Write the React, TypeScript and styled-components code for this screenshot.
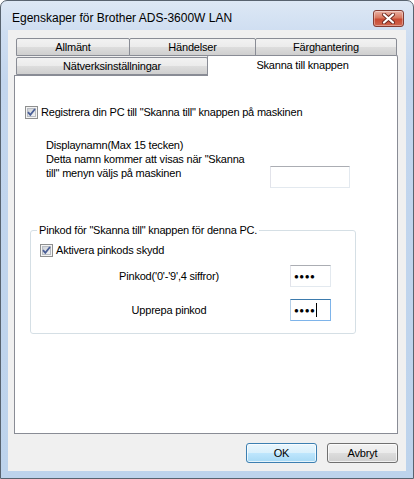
import React from "react";
import styled, { createGlobalStyle } from "styled-components";

const GlobalStyle = createGlobalStyle`
  html, body {
    margin: 0;
    padding: 0;
    background: #ffffff;
  }
  body {
    font-family: "Liberation Sans", Arial, sans-serif;
    font-size: 11px;
    letter-spacing: -0.2px;
    color: #000;
  }
`;

const Window = styled.div`
  width: 414px;
  height: 479px;
  box-sizing: border-box;
  border: 1px solid #58636f;
  border-radius: 7px 7px 0 0;
  background: linear-gradient(#dde8f5 0px, #cfdef1 30px, #c3d6ee 80px, #bdd3ec 100%);
  padding: 0 7px 7px 7px;
  display: flex;
  flex-direction: column;
  overflow: hidden;
`;

const TitleBar = styled.div`
  height: 29px;
  margin: 0 -7px;
  padding: 9px 9px 0 11px;
  box-sizing: border-box;
  display: flex;
  align-items: flex-start;
  justify-content: space-between;
  flex-shrink: 0;
`;

const TitleText = styled.div`
  font-family: "Liberation Sans", Arial, sans-serif;
  font-size: 12px;
  letter-spacing: 0;
  line-height: 16px;
  color: #000;
`;

const CloseBtn = styled.div`
  width: 31px;
  height: 17px;
  box-sizing: border-box;
  border: 1px solid #833c33;
  border-radius: 3px;
  background: linear-gradient(#eab2a6 0%, #d8785f 45%, #c94a33 55%, #d0674f 100%);
  box-shadow: inset 0 0 0 1px rgba(255, 255, 255, 0.35);
  display: flex;
  align-items: center;
  justify-content: center;
`;

const Client = styled.div`
  flex: 1;
  background: #f0f0f0;
  display: flex;
  flex-direction: column;
  padding: 9px 8px 8px 6px;
  box-sizing: border-box;
  gap: 9px;
`;

const TabControl = styled.div`
  flex: 1;
  display: flex;
  flex-direction: column;
`;

const TabRow = styled.div<{ $h: number }>`
  display: flex;
  align-items: flex-end;
  padding-left: 2px;
  height: ${(p) => p.$h}px;
`;

const Tab = styled.div<{ $w: number; $active?: boolean }>`
  width: ${(p) => p.$w}px;
  box-sizing: border-box;
  height: ${(p) => (p.$active ? 21 : 18)}px;
  border: 1px solid #898c95;
  border-bottom: ${(p) => (p.$active ? "none" : "1px solid #898c95")};
  border-radius: 2px 2px 0 0;
  background: ${(p) =>
    p.$active ? "#ffffff" : "linear-gradient(#f2f2f2 0%, #ebebeb 50%, #dddddd 51%, #cfcfcf 100%)"};
  display: flex;
  justify-content: center;
  align-items: ${(p) => (p.$active ? "flex-start" : "center")};
  padding-top: ${(p) => (p.$active ? 3 : 0)}px;
  margin-left: -1px;
  margin-bottom: ${(p) => (p.$active ? -1 : 0)}px;
  position: relative;
  z-index: ${(p) => (p.$active ? 2 : 1)};
  white-space: nowrap;
  &:first-child {
    margin-left: 0;
  }
`;

const Panel = styled.div`
  flex: 1;
  border: 1px solid #898c95;
  background: #ffffff;
  display: flex;
  flex-direction: column;
`;

const CheckRow = styled.div<{ $top: number; $left: number }>`
  display: flex;
  align-items: center;
  gap: 3px;
  height: 14px;
  margin-top: ${(p) => p.$top}px;
  padding-left: ${(p) => p.$left}px;
`;

const NameRow = styled.div`
  display: flex;
  align-items: flex-start;
  margin-top: 19px;
  padding-left: 31px;
`;

const NameText = styled.div`
  width: 224px;
  line-height: 14px;
`;

const TextBox = styled.div<{ $w: number; $focus?: boolean }>`
  width: ${(p) => p.$w}px;
  height: 22px;
  box-sizing: border-box;
  border: 1px solid ${(p) => (p.$focus ? "#7eb4ea" : "#e3e9ef")};
  border-top-color: ${(p) => (p.$focus ? "#3d7bad" : "#abadb3")};
  border-left-color: ${(p) => (p.$focus ? "#b5cfe7" : "#e2e3ea")};
  background: #fff;
  display: flex;
  align-items: center;
  padding-left: 3px;
  font-size: 8px;
  letter-spacing: 0.5px;
  flex-shrink: 0;
`;

const NameBox = styled(TextBox)`
  margin-top: 28px;
`;

const Caret = styled.span`
  display: inline-block;
  width: 1px;
  height: 14px;
  background: #000;
  margin-left: 1px;
`;

const Group = styled.fieldset`
  margin: 35px 0 0 15px;
  width: 326px;
  box-sizing: border-box;
  border: 1px solid #d5dfe5;
  border-radius: 3px;
  padding: 0 0 12px 0;
  display: flex;
  flex-direction: column;
`;

const Legend = styled.legend`
  margin-left: 6px;
  padding: 0 2px;
  line-height: 14px;
`;

const PinRow = styled.div<{ $top: number }>`
  display: flex;
  align-items: center;
  margin-top: ${(p) => p.$top}px;
  padding-left: 29px;
`;

const PinLabel = styled.div`
  width: 218px;
  text-align: center;
  margin-right: 12px;
`;

const ButtonRow = styled.div`
  display: flex;
  justify-content: flex-end;
  gap: 10px;
  height: 20px;
`;

const Button = styled.div<{ $default?: boolean }>`
  width: 71px;
  height: 20px;
  box-sizing: border-box;
  border: 1px solid ${(p) => (p.$default ? "#3c7fb1" : "#707070")};
  border-radius: 3px;
  background: ${(p) =>
    p.$default
      ? "linear-gradient(#eaf6fd 0%, #d9f0fc 50%, #bee6fd 51%, #a7d9f5 100%)"
      : "linear-gradient(#f2f2f2 0%, #ebebeb 50%, #dddddd 51%, #cfcfcf 100%)"};
  box-shadow: inset 0 0 0 1px rgba(255, 255, 255, 0.7);
  display: flex;
  align-items: center;
  justify-content: center;
`;

function CheckBox() {
  return (
    <svg width="13" height="13" viewBox="0 0 13 13">
      <defs>
        <linearGradient id="cbg" x1="0" y1="0" x2="1" y2="1">
          <stop offset="0" stopColor="#cbcfd5" />
          <stop offset="1" stopColor="#f6f6f6" />
        </linearGradient>
      </defs>
      <rect x="0.5" y="0.5" width="12" height="12" fill="#f4f4f4" stroke="#8e8f8f" />
      <rect x="2.5" y="2.5" width="8" height="8" fill="url(#cbg)" stroke="#b8bcc3" strokeWidth="1" />
      <path d="M3 6.2 L5.3 8.8 L10 3" fill="none" stroke="#4a5f97" strokeWidth="1.8" />
    </svg>
  );
}

function CloseGlyph() {
  return (
    <svg width="13" height="11" viewBox="0 0 13 11">
      <path d="M2 1.5 L11 9.5 M11 1.5 L2 9.5" stroke="#6e2a22" strokeWidth="4" strokeLinecap="round" />
      <path d="M2 1.5 L11 9.5 M11 1.5 L2 9.5" stroke="#ffffff" strokeWidth="2.2" strokeLinecap="round" />
    </svg>
  );
}

export default function App() {
  return (
    <>
      <GlobalStyle />
      <Window>
        <TitleBar>
          <TitleText>Egenskaper för Brother ADS-3600W LAN</TitleText>
          <CloseBtn>
            <CloseGlyph />
          </CloseBtn>
        </TitleBar>
        <Client>
          <TabControl>
            <TabRow $h={17}>
              <Tab $w={114}>Allmänt</Tab>
              <Tab $w={127}>Händelser</Tab>
              <Tab $w={142}>Färghantering</Tab>
            </TabRow>
            <TabRow $h={19}>
              <Tab $w={192}>Nätverksinställningar</Tab>
              <Tab $w={191} $active>
                Skanna till knappen
              </Tab>
            </TabRow>
            <Panel>
              <CheckRow $top={29} $left={10}>
                <CheckBox />
                <span>Registrera din PC till "Skanna till" knappen på maskinen</span>
              </CheckRow>
              <NameRow>
                <NameText>
                  Displaynamn(Max 15 tecken)
                  <br />
                  Detta namn kommer att visas när "Skanna
                  <br />
                  till" menyn väljs på maskinen
                </NameText>
                <NameBox $w={80} />
              </NameRow>
              <Group>
                <Legend>Pinkod för "Skanna till" knappen för denna PC.</Legend>
                <CheckRow $top={6} $left={9}>
                  <CheckBox />
                  <span>Aktivera pinkods skydd</span>
                </CheckRow>
                <PinRow $top={8}>
                  <PinLabel>Pinkod('0'-'9',4 siffror)</PinLabel>
                  <TextBox $w={41}>●●●●</TextBox>
                </PinRow>
                <PinRow $top={12}>
                  <PinLabel>Upprepa pinkod</PinLabel>
                  <TextBox $w={41} $focus>
                    ●●●●
                    <Caret />
                  </TextBox>
                </PinRow>
              </Group>
            </Panel>
          </TabControl>
          <ButtonRow>
            <Button $default>OK</Button>
            <Button>Avbryt</Button>
          </ButtonRow>
        </Client>
      </Window>
    </>
  );
}
